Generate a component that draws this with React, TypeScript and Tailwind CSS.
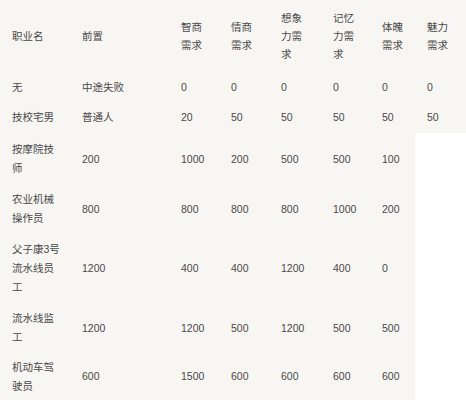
const COLS = 'grid grid-cols-[70px_99px_50px_50px_52px_49px_45px_51px]'

type Row = { cells: string[][]; h: string }

const header: string[][] = [
  ['职业名'],
  ['前置'],
  ['智商', '需求'],
  ['情商', '需求'],
  ['想象', '力需', '求'],
  ['记忆', '力需', '求'],
  ['体魄', '需求'],
  ['魅力', '需求'],
]

// the later rows have no 魅力 cell, so the table ends short there
const rows: Row[] = [
  { h: 'h-[30px]', cells: [['无'], ['中途失败'], ['0'], ['0'], ['0'], ['0'], ['0'], ['0']] },
  { h: 'h-[31px]', cells: [['技校宅男'], ['普通人'], ['20'], ['50'], ['50'], ['50'], ['50'], ['50']] },
  { h: 'h-[52px]', cells: [['按摩院技', '师'], ['200'], ['1000'], ['200'], ['500'], ['500'], ['100']] },
  { h: 'h-[48px]', cells: [['农业机械', '操作员'], ['800'], ['800'], ['800'], ['800'], ['1000'], ['200']] },
  { h: 'h-[70px]', cells: [['父子康3号', '流水线员', '工'], ['1200'], ['400'], ['400'], ['1200'], ['400'], ['0']] },
  { h: 'h-[50px]', cells: [['流水线监', '工'], ['1200'], ['1200'], ['500'], ['1200'], ['500'], ['500']] },
  { h: 'h-[47px]', cells: [['机动车驾', '驶员'], ['600'], ['1500'], ['600'], ['600'], ['600'], ['600']] },
]

const Cell = ({ lines }: { lines: string[] }) => (
  <div className="flex flex-col justify-center pl-3 bg-[#f8f6f3]">
    {lines.map((l, i) => (
      <span key={i} className="whitespace-nowrap">
        {l}
      </span>
    ))}
  </div>
)

export default function App() {
  return (
    <div
      className="w-[466px] h-[400px] overflow-hidden bg-white text-[10.5px] text-[#484848]"
      style={{ fontFamily: '"Liberation Sans", "Noto Sans CJK SC", sans-serif' }}
    >
      <div className={`${COLS} h-[72px] leading-[18px]`}>
        {header.map((c, i) => (
          <Cell key={i} lines={c} />
        ))}
      </div>
      {rows.map((r, i) => (
        <div key={i} className={`${COLS} ${r.h} leading-[19px]`}>
          {r.cells.map((c, j) => (
            <Cell key={j} lines={c} />
          ))}
        </div>
      ))}
    </div>
  )
}
